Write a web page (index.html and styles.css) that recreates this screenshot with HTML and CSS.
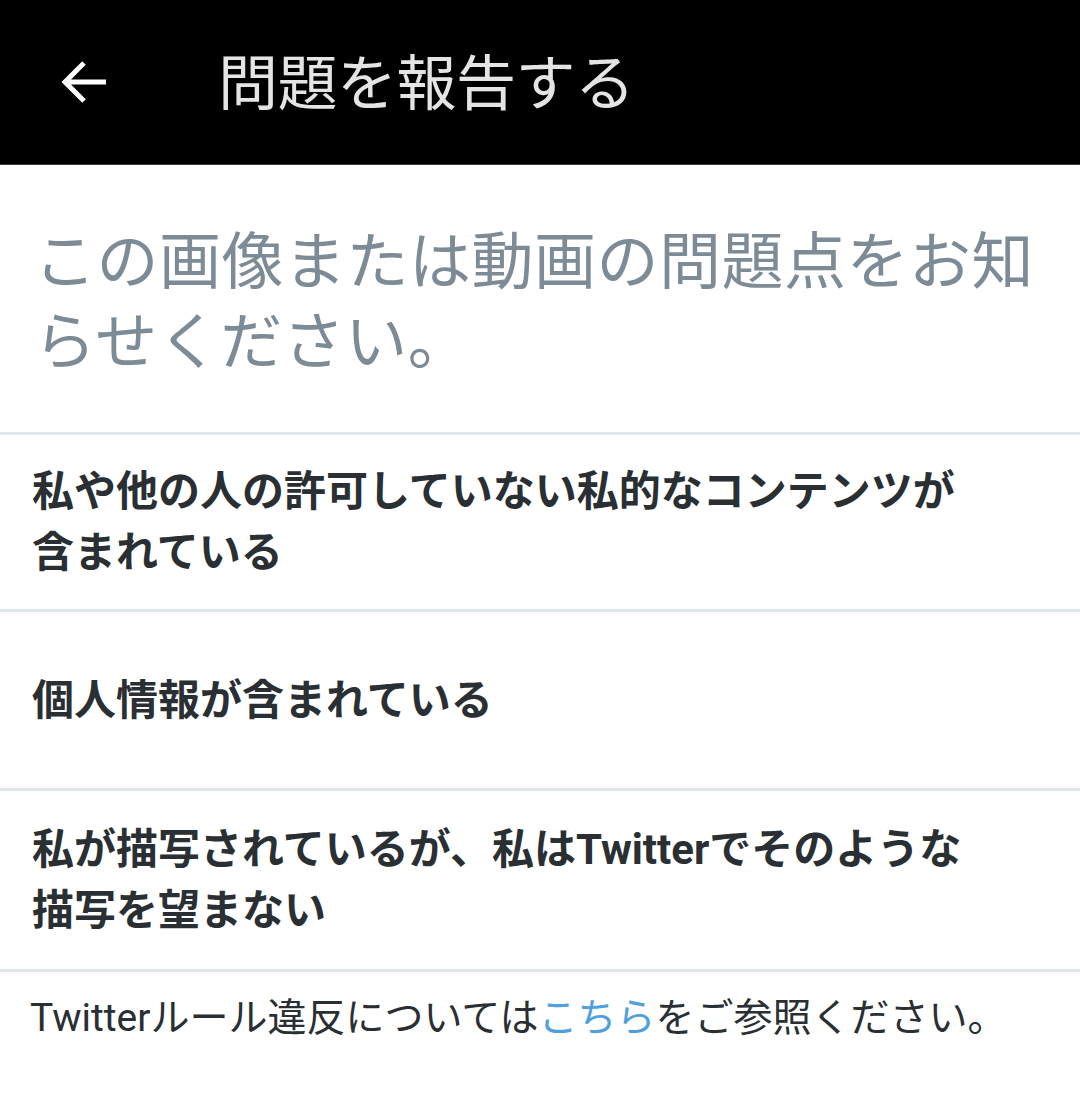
FILE: index.html
```html
<!DOCTYPE html>
<html lang="ja">
<head>
<meta charset="utf-8">
<title>問題を報告する</title>
<link rel="stylesheet" href="styles.css">
</head>
<body>
<header class="appbar">
  <span class="back" aria-label="戻る">
    <svg width="50" height="48" viewBox="0 0 50 48"><path d="M46 24H6M24 5L5 24L24 43" fill="none" stroke="#ffffff" stroke-width="5" stroke-linecap="butt" stroke-linejoin="miter"/></svg>
  </span>
  <h1 class="title">問題を報告する</h1>
</header>
<main>
  <p class="prompt">この画像または動画の問題点をお知らせください。</p>
  <ul class="options">
    <li class="option option-a">私や他の人の許可していない私的なコンテンツが<br>含まれている</li>
    <li class="option option-b">個人情報が含まれている</li>
    <li class="option option-c">私が描写されているが、私はTwitterでそのような<br>描写を望まない</li>
  </ul>
  <p class="footer">Twitterルール違反については<a class="link" href="#">こちら</a>をご参照ください。</p>
</main>
</body>
</html>
```
FILE: styles.css
```css
* { box-sizing: border-box; }
html, body { margin: 0; padding: 0; background: #ffffff; }
body {
  width: 1080px;
  font-family: Roboto, "Noto Sans CJK JP", sans-serif;
  color: #292f33;
}
.appbar {
  height: 165px;
  background: #000000;
  border-bottom: 1px solid #3a3a3a;
  display: flex;
  align-items: center;
  padding-left: 60px;
}
.back { display: flex; width: 50px; height: 48px; }
.title {
  margin: 6px 0 0 108px;
  font-size: 60px;
  font-weight: 400;
  color: #e4e4e4;
  line-height: 1;
  letter-spacing: -0.5px;
}
.prompt {
  margin: 0;
  padding: 58px 32px 49px 34px;
  font-size: 62px;
  line-height: 80px;
  color: #7d8b96;
  letter-spacing: 0.5px;
}
.options { list-style: none; margin: 0; padding: 0; border-top: 3px solid #e1e8ed; }
.option {
  display: flex;
  align-items: center;
  padding: 0 32px;
  font-size: 42px;
  font-weight: 700;
  line-height: 61px;
  border-bottom: 3px solid #e1e8ed;
  color: #292f33;
}
.option-a { min-height: 177px; }
.option-b { min-height: 179px; }
.option-c { min-height: 181px; }
.footer {
  margin: 0;
  padding: 20px 30px;
  font-size: 39px;
  line-height: 52px;
  color: #292f33;
}
.link { color: #4fa0dd; text-decoration: none; }
```
